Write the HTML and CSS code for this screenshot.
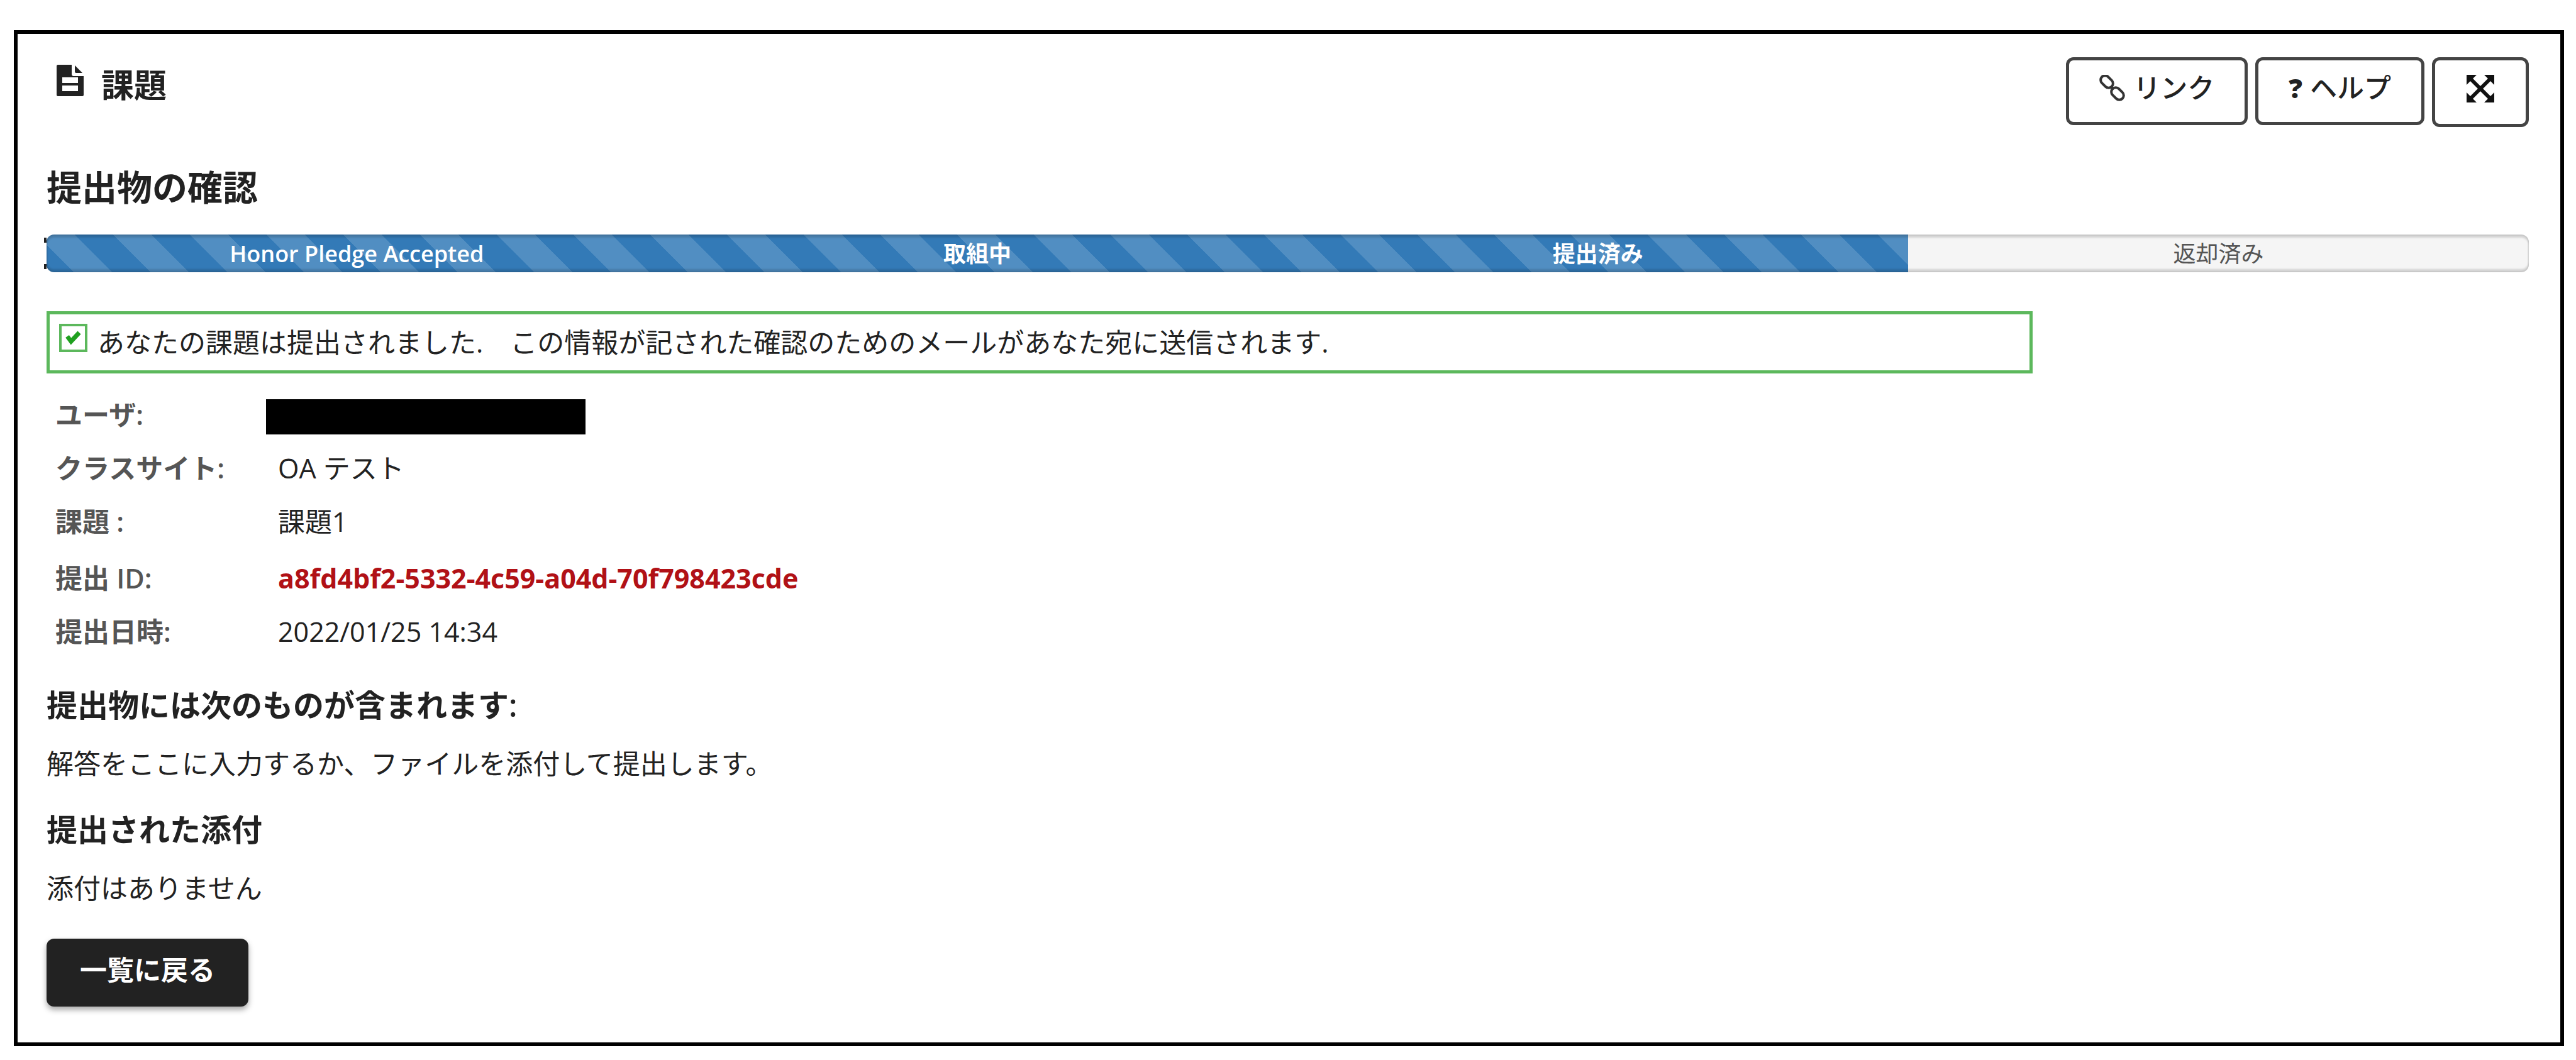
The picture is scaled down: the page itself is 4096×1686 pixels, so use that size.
FILE: index.html
```html
<!DOCTYPE html>
<html lang="ja">
<head>
    <meta charset="UTF-8">
    <title>課題</title>
    <link rel="stylesheet" href="styles.css">
</head>
<body>
    <main class="frame">
        <header class="tool-header">
            <h1 class="tool-title">
                <svg class="title-icon" viewBox="0 0 43 50" aria-hidden="true">
                    <path fill="#222" fill-rule="evenodd" d="M2 0h22v15q0 3 3 3h16v30q0 2-2 2H2q-2 0-2-2V2q0-2 2-2zM9 20v9h25v-9zM9 33v9h25v-9z"/>
                    <path fill="#222" d="M29 1l12 12H31q-2 0-2-2z"/>
                </svg>
                課題
            </h1>
            <div class="tool-actions">
                <button type="button" class="btn">
                    <svg class="link-icon" viewBox="0 0 42 42" fill="none" stroke="#333" stroke-width="4" aria-hidden="true">
                        <rect x="-11" y="-7" width="22" height="14" rx="7" transform="translate(12 11) rotate(45)"/>
                        <rect x="-11" y="-7" width="22" height="14" rx="7" transform="translate(29 30) rotate(45)"/>
                        <path d="M18 18l5 5"/>
                    </svg>
                    リンク
                </button>
                <button type="button" class="btn"><span class="question">?</span>ヘルプ</button>
                <button type="button" class="btn btn-full" aria-label="全画面">
                    <svg class="full-icon" viewBox="0 0 46 46" aria-hidden="true">
                        <path stroke="#111" stroke-width="6" d="M7 7l32 32M39 7L7 39"/>
                        <path fill="#111" d="M1 1h16L1 17zM45 1v16L29 1zM1 45V29l16 16zM45 45H29l16-16z"/>
                    </svg>
                </button>
            </div>
        </header>

        <h2 class="page-title">提出物の確認</h2>

        <div class="progress">
            <div class="steps-done">
                <span class="step">Honor Pledge Accepted</span>
                <span class="step">取組中</span>
                <span class="step">提出済み</span>
            </div>
            <span class="step step-next">返却済み</span>
        </div>

        <div class="alert">
            <svg class="check-icon" viewBox="0 0 45 45" fill="none" aria-hidden="true">
                <rect x="2" y="2" width="41" height="41" stroke="#5cb85c" stroke-width="4"/>
                <path stroke="#1fa01f" stroke-width="7" d="M13 20l6 8 13-14"/>
            </svg>
            <span>あなたの課題は提出されました.&#12288;この情報が記された確認のためのメールがあなた宛に送信されます.</span>
        </div>

        <table class="details">
            <tr>
                <th scope="row">ユーザ:</th>
                <td class="hidden-name"><div class="redacted"></div></td>
            </tr>
            <tr>
                <th scope="row">クラスサイト:</th>
                <td>OA テスト</td>
            </tr>
            <tr>
                <th scope="row">課題 :</th>
                <td>課題1</td>
            </tr>
            <tr class="id-row">
                <th scope="row">提出 ID:</th>
                <td class="submission-id">a8fd4bf2-5332-4c59-a04d-70f798423cde</td>
            </tr>
            <tr>
                <th scope="row">提出日時:</th>
                <td>2022/01/25 14:34</td>
            </tr>
        </table>

        <h3>提出物には次のものが含まれます:</h3>
        <p>解答をここに入力するか、ファイルを添付して提出します。</p>
        <h3>提出された添付</h3>
        <p>添付はありません</p>

        <button type="button" class="btn-back">一覧に戻る</button>
    </main>
</body>
</html>
```
FILE: styles.css
```css
* {
    box-sizing: border-box;
}

body {
    margin: 0;
    padding: 48px 19px 20px 22px;
    background-color: #fff;
    color: #222;
    font-family: "Open Sans", "Noto Sans CJK JP", sans-serif;
    font-size: 43px;
    line-height: 60px;
}

h1, h2, h3, p {
    margin: 0;
}

button {
    font-family: inherit;
    font-size: inherit;
    line-height: inherit;
}

.frame {
    border: 6px solid #000;
    padding: 37px 50px 57px 46px;
}

/* Header with the tool name and its buttons */
.tool-header {
    display: flex;
    justify-content: space-between;
    align-items: flex-start;
}

.tool-title {
    display: flex;
    align-items: center;
    gap: 28px;
    padding-left: 16px;
    font-size: 52px;
    line-height: 88px;
    font-weight: 600;
}

.title-icon {
    width: 43px;
    height: 50px;
    margin-bottom: 14px;
}

.tool-actions {
    display: flex;
    align-items: flex-start;
    gap: 12px;
}

.btn {
    display: flex;
    align-items: center;
    gap: 12px;
    padding: 14px 48px 24px;
    background-color: #fff;
    border: 5px solid #444;
    border-radius: 12px;
    color: #222;
    font-weight: 500;
}

.btn-full {
    padding: 22px 49px 33px;
}

.link-icon {
    width: 42px;
    height: 42px;
}

.full-icon {
    width: 46px;
    height: 46px;
}

.question {
    font-weight: 800;
}

.page-title {
    margin-top: 60px;
    font-size: 56px;
    line-height: 70px;
    font-weight: 600;
}

/* Progress bar */
.progress {
    position: relative;
    display: flex;
    height: 60px;
    margin-top: 41px;
    background-color: #f5f5f5;
    border-radius: 12px;
    font-size: 36px;
}

.progress::before {
    content: "";
    position: absolute;
    left: -4px;
    top: 5px;
    width: 4px;
    height: 34px;
    border-top: 8px solid #222;
    border-bottom: 8px solid #222;
}

.progress::after {
    content: "";
    position: absolute;
    inset: 0;
    border-radius: 12px;
    box-shadow: inset 0 5px 3px rgba(0, 0, 0, 0.14), inset 0 -5px 3px rgba(0, 0, 0, 0.14), inset 0 0 0 2px rgba(0, 0, 0, 0.04);
}

.steps-done {
    display: flex;
    flex: 3;
    background-color: #337ab7;
    background-image: linear-gradient(45deg, rgba(255, 255, 255, 0.15) 25%, transparent 25%, transparent 50%, rgba(255, 255, 255, 0.15) 50%, rgba(255, 255, 255, 0.15) 75%, transparent 75%, transparent);
    background-size: 122px 122px;
    background-position: -16px 0;
    border-radius: 12px 0 0 12px;
    color: #fff;
    font-weight: 600;
}

.step {
    flex: 1;
    text-align: center;
    line-height: 62px;
}

.step-next {
    color: #555;
    font-weight: 400;
}

/* Confirmation message */
.alert {
    display: flex;
    align-items: flex-start;
    gap: 16px;
    width: 80%;
    margin-top: 62px;
    padding: 15px;
    border: 5px solid #5cb85c;
    line-height: 59px;
}

.check-icon {
    width: 45px;
    height: 45px;
}

/* Submission details */
.details {
    margin-top: 23px;
    border-collapse: collapse;
}

.details th,
.details td {
    height: 85px;
    padding: 0;
    text-align: left;
}

.details th {
    width: 349px;
    padding-left: 14px;
    color: #555;
    font-weight: 600;
}

.details td {
    padding-left: 19px;
}

.details .id-row th,
.details .id-row td {
    height: 90px;
    padding-top: 5px;
}

.details .submission-id {
    color: #b11116;
    font-weight: 700;
}

.details .hidden-name {
    padding: 6px 0 0;
}

.redacted {
    width: 508px;
    height: 56px;
    background-color: #000;
}

h3 {
    margin: 40px 0 30px;
    font-size: 49px;
    line-height: 68px;
    font-weight: 600;
}

.btn-back {
    display: block;
    margin-top: 50px;
    padding: 20px 53px 28px;
    background-color: #222;
    border: 0;
    border-radius: 12px;
    box-shadow: 0 5px 10px rgba(0, 0, 0, 0.35);
    color: #fff;
    font-weight: 700;
}
```
